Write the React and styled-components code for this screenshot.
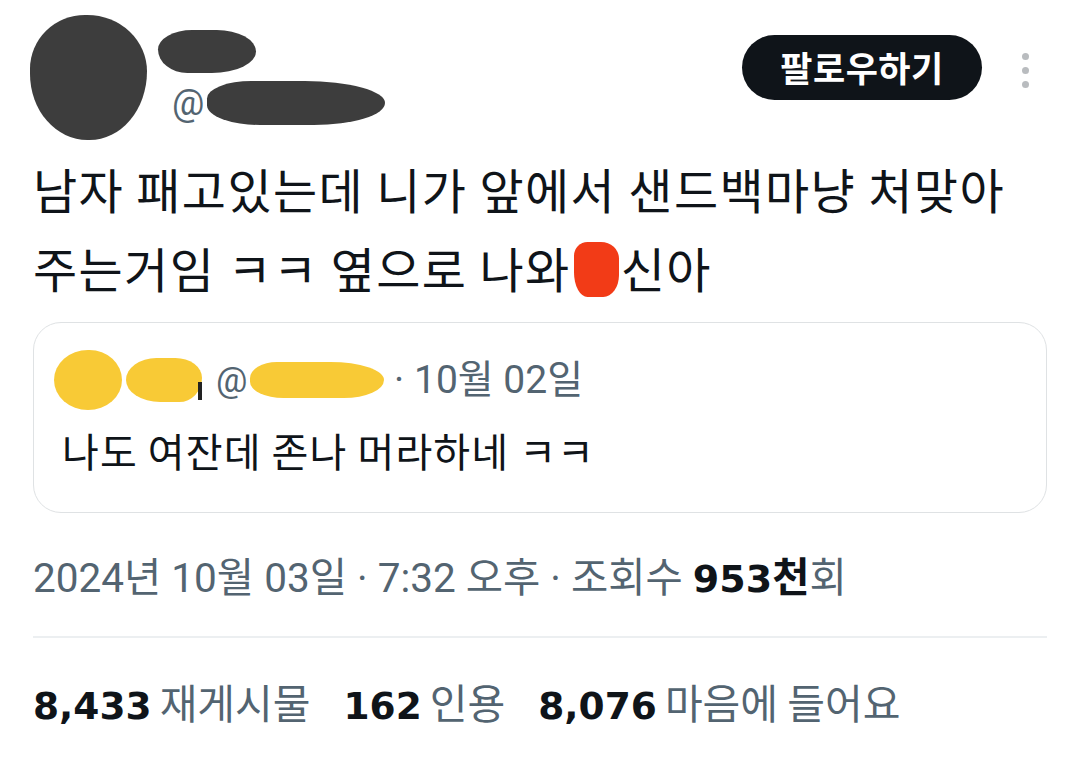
import React from "react";
import styled, { createGlobalStyle } from "styled-components";

const Global = createGlobalStyle`
  html, body { margin: 0; padding: 0; background: #ffffff; }
  body {
    font-family: Roboto, "Noto Sans CJK KR", "Noto Sans", sans-serif;
    color: #0f1419;
    -webkit-font-smoothing: antialiased;
  }
`;

const Page = styled.div`
  width: 1080px;
  height: 759px;
  box-sizing: border-box;
  padding: 0 33px;
  overflow: hidden;
  background: #fff;
`;

const Header = styled.header`
  display: flex;
  align-items: flex-start;
  padding-top: 15px;
`;

const Avatar = styled.div`
  width: 117px;
  height: 125px;
  margin-left: -3px;
  background: #3d3d3d;
  border-radius: 48% 52% 50% 50% / 44% 46% 56% 54%;
  flex-shrink: 0;
`;

const Identity = styled.div`
  display: flex;
  flex-direction: column;
  margin-left: 11px;
  padding-top: 15px;
`;

const Blob = styled.span`
  display: inline-block;
  background: ${(p) => p.$color || "#3d3d3d"};
  width: ${(p) => p.$w}px;
  height: ${(p) => p.$h}px;
  border-radius: ${(p) => p.$r || "40% 45% 50% 40% / 50% 50% 50% 50%"};
  flex-shrink: 0;
`;

const HandleRow = styled.div`
  display: flex;
  align-items: center;
  margin-top: 8px;
  margin-left: 14px;
`;

const At = styled.span`
  font-family: Roboto, "Noto Sans", sans-serif;
  font-size: ${(p) => p.$size || 36}px;
  line-height: 1;
  color: #536471;
  margin-right: 3px;
`;

const Spacer = styled.div`
  flex: 1;
`;

const FollowButton = styled.button`
  margin-top: 20px;
  width: 240px;
  height: 65px;
  border: none;
  border-radius: 33px;
  background: #0f1419;
  color: #fff;
  font-family: "Noto Sans CJK KR", sans-serif;
  font-weight: 700;
  font-size: 35px;
  letter-spacing: 0.5px;
  line-height: 1;
  padding: 0 0 2px;
  display: flex;
  align-items: center;
  justify-content: center;
`;

const More = styled.div`
  display: flex;
  flex-direction: column;
  gap: 7px;
  margin-top: 38px;
  margin-left: 40px;
  margin-right: 18px;
`;

const Dot = styled.span`
  width: 7px;
  height: 7px;
  border-radius: 50%;
  background: #b9bcbf;
`;

const TweetText = styled.p`
  margin: 9px 0 0;
  font-family: "Noto Sans CJK KR", sans-serif;
  font-size: 48px;
  letter-spacing: 1.4px;
  line-height: 79px;
  color: #0f1419;
  white-space: nowrap;
`;

const Censor = styled.span`
  display: inline-block;
  width: 45px;
  height: 55px;
  vertical-align: -9px;
  margin: 0 2px 0 3px;
  background: #f23b17;
  border-radius: 30% 40% 35% 30% / 25% 30% 40% 45%;
`;

const QuoteCard = styled.div`
  margin-top: 15px;
  border: 1.5px solid #dfe2e4;
  border-radius: 28px;
  padding: 27px 28px 37px 28px;
`;

const QuoteHeader = styled.div`
  display: flex;
  align-items: center;
  height: 60px;
`;

const Mark = styled.span`
  display: inline-block;
  width: 4px;
  height: 18px;
  background: #222;
  margin-top: 22px;
  margin-left: -4px;
`;

const Meta = styled.span`
  font-family: Roboto, "Noto Sans CJK KR", sans-serif;
  font-size: 39px;
  line-height: 1;
  color: #536471;
`;

const QuoteText = styled.p`
  margin: 15px 0 0;
  font-family: "Noto Sans CJK KR", sans-serif;
  font-size: 40px;
  letter-spacing: 1.1px;
  line-height: 50px;
  color: #0f1419;
  white-space: nowrap;
`;

const DateLine = styled.div`
  margin-top: 37px;
  font-size: 40.5px;
  line-height: 50px;
  color: #536471;
  white-space: nowrap;
`;

const Strong = styled.b`
  font-family: "DejaVu Sans", "Noto Sans CJK KR", sans-serif;
  font-weight: 700;
  color: #0f1419;
  font-size: ${(p) => p.$size || 38}px;
`;

const StrongHangul = styled.b`
  font-family: "Noto Sans CJK KR", sans-serif;
  font-weight: 700;
  color: #0f1419;
`;

const Divider = styled.hr`
  margin: 32px 0 0;
  border: none;
  height: 2px;
  background: #eceff1;
`;

const Stats = styled.div`
  margin-top: 38px;
  display: flex;
  align-items: baseline;
  gap: 33px;
  line-height: 50px;
  white-space: nowrap;
`;

const Stat = styled.span`
  display: inline-flex;
  align-items: baseline;
  gap: 8px;
`;

const StatLabel = styled.span`
  font-family: "Noto Sans CJK KR", sans-serif;
  font-size: 41px;
  color: #536471;
`;

export default function App() {
  return (
    <>
      <Global />
      <Page>
        <Header>
          <Avatar />
          <Identity>
            <Blob $w={98} $h={43} $r="35% 40% 45% 30% / 45% 50% 50% 55%" />
            <HandleRow>
              <At>@</At>
              <Blob $w={178} $h={44} $r="25% 45% 40% 30% / 40% 50% 50% 45%" />
            </HandleRow>
          </Identity>
          <Spacer />
          <FollowButton>팔로우하기</FollowButton>
          <More>
            <Dot />
            <Dot />
            <Dot />
          </More>
        </Header>

        <TweetText>
          남자 패고있는데 니가 앞에서 샌드백마냥 처맞아
          <br />
          주는거임 ㅋㅋ 옆으로 나와<Censor />신아
        </TweetText>

        <QuoteCard>
          <QuoteHeader>
            <Blob $color="#f8ca36" $w={68} $h={60} $r="50% 48% 50% 50% / 50% 50% 50% 50%" style={{ marginLeft: -8 }} />
            <Blob $color="#f8ca36" $w={76} $h={44} $r="40% 35% 30% 45% / 50% 45% 55% 50%" style={{ marginLeft: 4 }} />
            <Mark />
            <At $size={35} style={{ marginLeft: 14 }}>@</At>
            <Blob $color="#f8ca36" $w={134} $h={36} $r="20% 40% 30% 25% / 45% 50% 50% 45%" />
            <Meta>&nbsp;· 10월 02일</Meta>
          </QuoteHeader>
          <QuoteText>나도 여잔데 존나 머라하네 ㅋㅋ</QuoteText>
        </QuoteCard>

        <DateLine>
          2024년 10월 03일 · 7:32 오후 · 조회수 <Strong $size={38}>953</Strong>
          <StrongHangul>천</StrongHangul>회
        </DateLine>

        <Divider />

        <Stats>
          <Stat>
            <Strong $size={37.5}>8,433</Strong>
            <StatLabel>재게시물</StatLabel>
          </Stat>
          <Stat>
            <Strong $size={37.5}>162</Strong>
            <StatLabel>인용</StatLabel>
          </Stat>
          <Stat>
            <Strong $size={37.5}>8,076</Strong>
            <StatLabel>마음에 들어요</StatLabel>
          </Stat>
        </Stats>
      </Page>
    </>
  );
}
